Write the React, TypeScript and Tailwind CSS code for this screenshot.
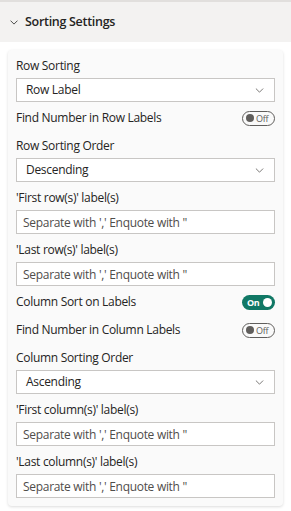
import React from 'react';

const FONT = "font-['Segoe_UI','Open_Sans',sans-serif]";

const Chevron = ({ className }: { className?: string }) => (
  <svg viewBox="0 0 10 6" className={className} fill="none">
    <path d="M1 1l4 4 4-4" stroke="currentColor" strokeWidth="1" strokeLinecap="round" strokeLinejoin="round" />
  </svg>
);

const Label = ({ text }: { text: string }) => (
  <div className="h-6 flex items-center text-[12px] tracking-[-0.3px] text-[#252423]">{text}</div>
);

const Select = ({ value }: { value: string }) => (
  <div className="h-6 flex items-center justify-between border border-[#c8c6c4] bg-white pl-[9px] pr-[10px] text-[12px] tracking-[-0.3px] text-[#252423]">
    <span>{value}</span>
    <Chevron className="w-[9px] h-[5px] text-[#605e5c]" />
  </div>
);

const TextInput = () => (
  <input
    className="block h-6 w-full border border-[#c8c6c4] bg-white px-[6px] text-[12px] tracking-[-0.3px] text-[#252423] placeholder:text-[#4f4d4b] outline-none"
    placeholder={`Separate with ',' Enquote with "`}
  />
);

const Toggle = ({ on }: { on: boolean }) =>
  on ? (
    <div className="w-[33px] h-[15px] rounded-full bg-[#117865] flex items-center justify-between pl-[5px] pr-[3px]">
      <span className="text-[9px] font-bold text-white leading-none tracking-[-0.3px]">On</span>
      <span className="w-[9px] h-[9px] rounded-full bg-white" />
    </div>
  ) : (
    <div className="w-[33px] h-[15px] rounded-full border border-[#605e5c] flex items-center gap-[2px] pl-[3px]">
      <span className="w-[8px] h-[8px] rounded-full bg-[#605e5c]" />
      <span className="text-[9px] text-[#605e5c] leading-none tracking-[-0.3px]">Off</span>
    </div>
  );

const ToggleRow = ({ text, on }: { text: string; on: boolean }) => (
  <div className="h-6 flex items-center justify-between text-[12px] tracking-[-0.3px] text-[#252423]">
    <span>{text}</span>
    <Toggle on={on} />
  </div>
);

export default function App() {
  return (
    <div className={`w-[291px] h-[511px] bg-white overflow-hidden ${FONT}`}>
      {/* header */}
      <div className="border-t-2 border-[#e1dfdd] h-[42px] bg-[#f3f2f1] flex items-center pl-[10px] gap-[7px]">
        <Chevron className="w-[8px] h-[5px] text-[#252423]" />
        <span className="text-[12.5px] font-semibold tracking-[-0.3px] text-[#252423]">Sorting Settings</span>
      </div>

      {/* card */}
      <div className="mt-[8px] mx-[8px] rounded-[4px] bg-[#fafafa] shadow-[0_1px_3px_rgba(0,0,0,0.14)] px-[8px] pt-[4px] pb-[8px] flex flex-col gap-1">
        <div>
          <Label text="Row Sorting" />
          <Select value="Row Label" />
        </div>
        <ToggleRow text="Find Number in Row Labels" on={false} />
        <div>
          <Label text="Row Sorting Order" />
          <Select value="Descending" />
        </div>
        <div>
          <Label text="'First row(s)' label(s)" />
          <TextInput />
        </div>
        <div>
          <Label text="'Last row(s)' label(s)" />
          <TextInput />
        </div>
        <ToggleRow text="Column Sort on Labels" on={true} />
        <ToggleRow text="Find Number in Column Labels" on={false} />
        <div>
          <Label text="Column Sorting Order" />
          <Select value="Ascending" />
        </div>
        <div>
          <Label text="'First column(s)' label(s)" />
          <TextInput />
        </div>
        <div>
          <Label text="'Last column(s)' label(s)" />
          <TextInput />
        </div>
      </div>
    </div>
  );
}
